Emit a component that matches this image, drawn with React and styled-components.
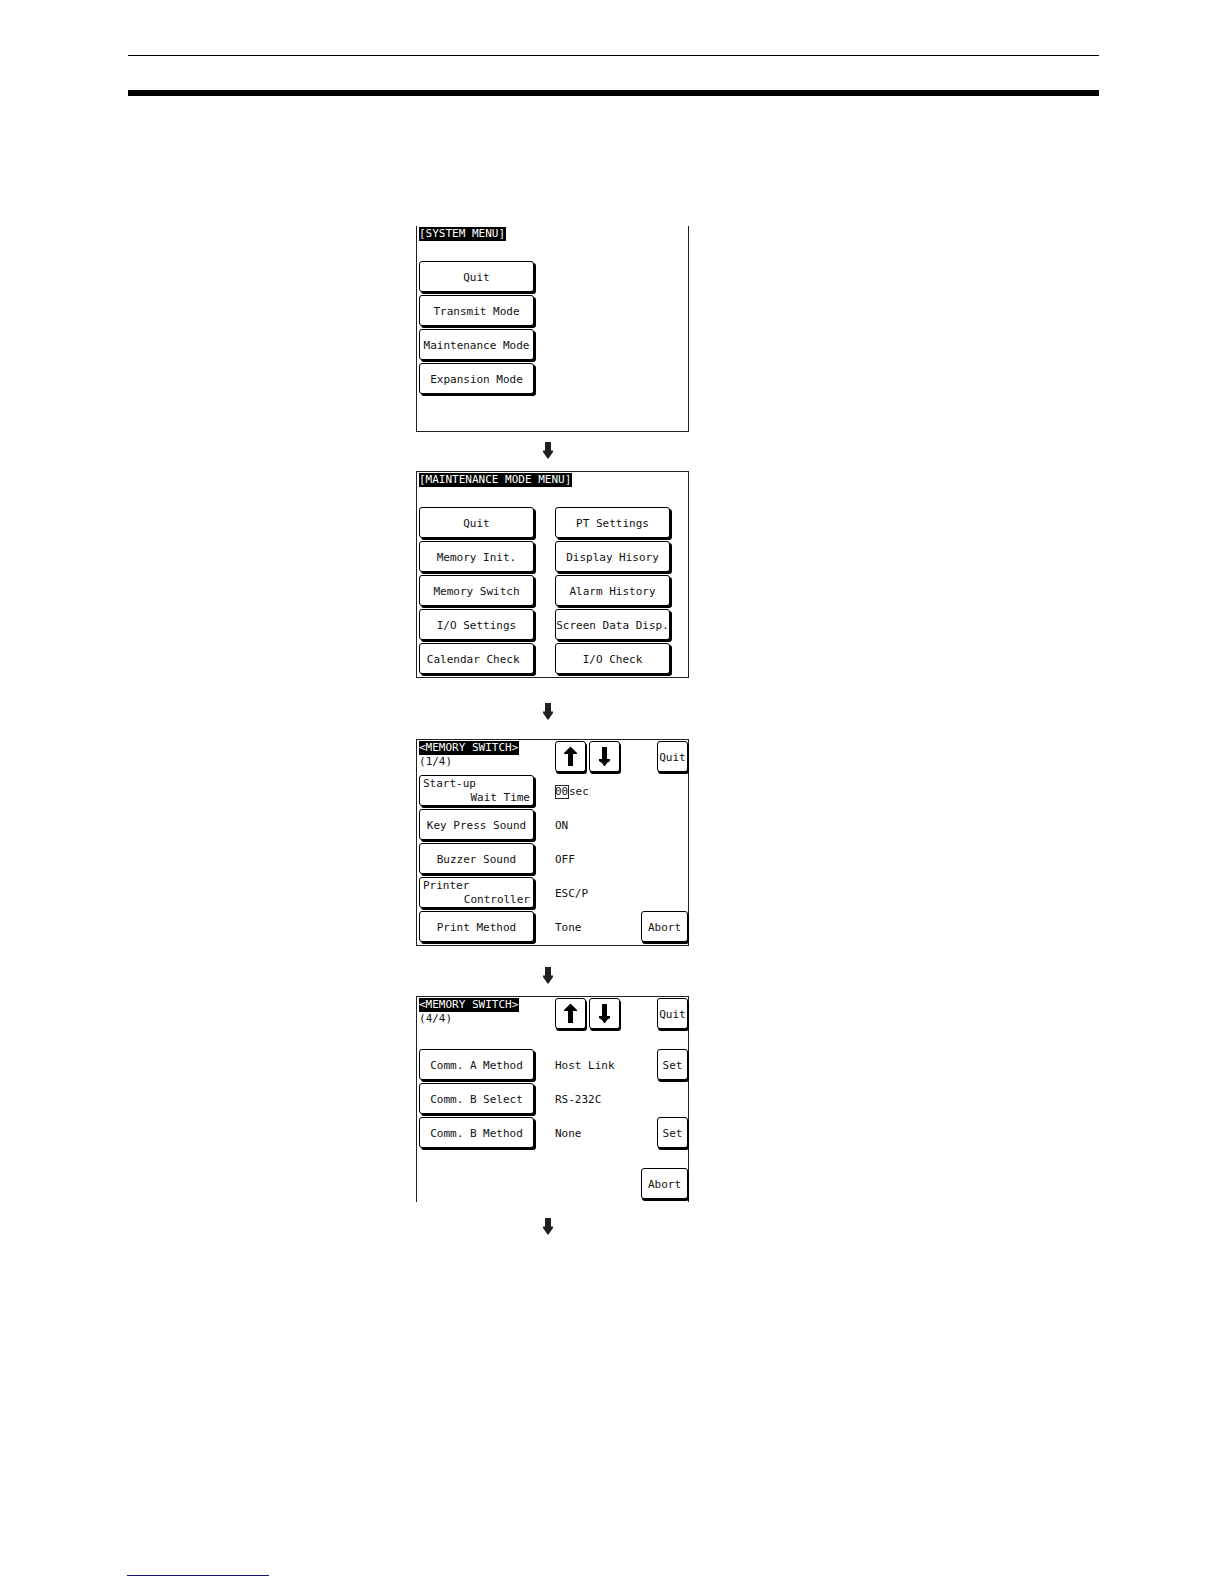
import React, { useState } from "react";
import styled, { createGlobalStyle } from "styled-components";

const GlobalStyle = createGlobalStyle`
  * {
    box-sizing: border-box;
  }
  body {
    margin: 0;
    background: #fff;
  }
`;

const Page = styled.div`
  display: flex;
  flex-direction: column;
  min-height: 100vh;
  padding: 55px 125px 8px 127px;
  color: #111;
  font-family: "DejaVu Sans Mono", "Liberation Mono", monospace;
  font-size: 11px;
  line-height: 14px;
`;

const Header = styled.header`
  height: 41px;
  margin-left: 1px;
  border-top: 1px solid #000;
  border-bottom: 6px solid #000;
`;

const Flow = styled.main`
  display: flex;
  flex-direction: column;
  align-items: flex-start;
  margin: 130px 0 40px 289px;
`;

const FootLine = styled.footer`
  width: 142px;
  margin-top: auto;
  border-top: 1px solid #14147d;
`;

const Screen = styled.section`
  display: flex;
  flex-direction: column;
  gap: ${(props) => props.$gap || 20}px;
  width: 273px;
  padding: 1px 0 ${(props) => props.$bottom || 3}px 2px;
  border: 1px solid #222;
  border-top-width: ${(props) => (props.$openTop ? 0 : 1)}px;
  border-bottom-width: ${(props) => (props.$openBottom ? 0 : 1)}px;
`;

const Title = styled.h2`
  align-self: flex-start;
  margin: 0;
  padding-right: 1px;
  background: #000;
  color: #fff;
  font-size: 11px;
  font-weight: 400;
  line-height: 14px;
  white-space: pre;
`;

const Menu = styled.nav`
  display: grid;
  grid-template-columns: 115px 115px;
  gap: 3px 21px;
`;

const Rows = styled.div`
  display: flex;
  flex-direction: column;
  gap: 3px;
`;

const Row = styled.div`
  display: grid;
  grid-template-columns: 115px 1fr auto;
  column-gap: 21px;
  align-items: center;
  min-height: 31px;
`;

const Heading = styled.div`
  display: flex;
  flex-direction: column;
  align-self: start;
`;

const Pager = styled.div`
  display: flex;
  gap: 3px;
`;

const Key = styled.button`
  display: flex;
  align-items: center;
  justify-content: center;
  height: 31px;
  padding: 3px 0 0;
  border: 1px solid #000;
  border-radius: 3px;
  background: #fff;
  box-shadow: 2px 2px 0 #000;
  color: inherit;
  font: inherit;
  white-space: pre;
`;

const TwoLineKey = styled(Key)`
  flex-direction: column;
  align-items: stretch;
  padding: 1px 3px 0;
  text-align: left;

  span + span {
    text-align: right;
  }
`;

const SmallKey = styled(Key)`
  justify-self: end;
  grid-column: 3;
  width: ${(props) => (props.$wide ? 47 : 31)}px;
  box-shadow: 1px 2px 0 #000;
`;

const PageKey = styled(SmallKey)`
  padding: 0;
`;

const Value = styled.output`
  display: flex;
  align-items: center;
  padding-top: 3px;
  white-space: pre;
`;

const Seconds = styled.input`
  width: 14px;
  height: 14px;
  padding: 0;
  border: 0;
  background: #fff;
  box-shadow: inset 0 0 0 1px #222;
  color: inherit;
  font: inherit;
`;

const Connector = styled.div`
  display: flex;
  padding: ${(props) => props.$before}px 0 ${(props) => props.$after}px 127px;

  svg {
    display: block;
  }
`;

function Next({ before, after }) {
  return (
    <Connector $before={before} $after={after}>
      <svg width="10" height="17" viewBox="0 0 10 17" aria-hidden="true">
        <path d="M2 0h6v8.500h2v1.500L5.500 16.500h-1L0 10V8.500h2z" fill="#231f20" />
      </svg>
    </Connector>
  );
}

function UpArrow() {
  return (
    <svg width="13" height="19" viewBox="0 0 13 19" aria-hidden="true">
      <path d="M6 0h1l2 2 2 2 2 2v1H9v12H4V7H0V6l2-2 2-2z" fill="#000" />
    </svg>
  );
}

function DownArrow() {
  return (
    <svg width="13" height="19" viewBox="0 0 13 19" aria-hidden="true">
      <path d="M4 0h5v12h3v2l-3 2-2 3H6l-2-3-3-2v-2h3z" fill="#000" />
    </svg>
  );
}

function SwitchHeader({ page }) {
  return (
    <Row>
      <Heading>
        <Title>{"<MEMORY SWITCH>"}</Title>
        <span>({page}/4)</span>
      </Heading>
      <Pager>
        <PageKey type="button" aria-label="Previous page"><UpArrow /></PageKey>
        <PageKey type="button" aria-label="Next page"><DownArrow /></PageKey>
      </Pager>
      <SmallKey type="button">Quit</SmallKey>
    </Row>
  );
}

// left and right column keys, row by row
const maintenanceKeys = [
  "Quit", "PT Settings",
  "Memory Init.", "Display Hisory",
  "Memory Switch", "Alarm History",
  "I/O Settings", "Screen Data Disp.",
  "Calendar Check ", "I/O Check",
];

const commRows = [
  { name: "Comm. A Method", value: "Host Link", set: true },
  { name: "Comm. B Select", value: "RS-232C", set: false },
  { name: "Comm. B Method", value: "None", set: true },
];

const SystemMenu = styled(Menu)`
  grid-template-columns: 115px;
`;

function App() {
  const [wait, setWait] = useState("00");

  return (
    <Page>
      <GlobalStyle />
      <Header />
      <Flow>
        <Screen $openTop $bottom={37}>
          <Title>[SYSTEM MENU]</Title>
          <SystemMenu>
            <Key type="button">Quit</Key>
            <Key type="button">Transmit Mode</Key>
            <Key type="button">Maintenance Mode</Key>
            <Key type="button">Expansion Mode</Key>
          </SystemMenu>
        </Screen>
        <Next before={10} after={12} />

        <Screen>
          <Title>[MAINTENANCE MODE MENU]</Title>
          <Menu>
            {maintenanceKeys.map((name, i) => (
              <Key type="button" key={i}>{name}</Key>
            ))}
          </Menu>
        </Screen>
        <Next before={25} after={19} />

        <Screen $gap={3}>
          <SwitchHeader page={1} />
          <Rows>
            <Row>
              <TwoLineKey type="button">
                <span>Start-up</span>
                <span>Wait Time</span>
              </TwoLineKey>
              <Value as="label">
                <Seconds
                  value={wait}
                  maxLength={2}
                  aria-label="Start-up wait time"
                  onChange={(e) => setWait(e.target.value)}
                />
                sec
              </Value>
            </Row>
            <Row>
              <Key type="button">Key Press Sound</Key>
              <Value>ON</Value>
            </Row>
            <Row>
              <Key type="button">Buzzer Sound</Key>
              <Value>OFF</Value>
            </Row>
            <Row>
              <TwoLineKey type="button">
                <span>Printer</span>
                <span>Controller</span>
              </TwoLineKey>
              <Value>ESC/P</Value>
            </Row>
            <Row>
              <Key type="button">Print Method</Key>
              <Value>Tone</Value>
              <SmallKey type="button" $wide>Abort</SmallKey>
            </Row>
          </Rows>
        </Screen>
        <Next before={21} after={12} />

        <Screen $openBottom>
          <SwitchHeader page={4} />
          <Rows>
            {commRows.map((row) => (
              <Row key={row.name}>
                <Key type="button">{row.name}</Key>
                <Value>{row.value}</Value>
                {row.set ? <SmallKey type="button">Set</SmallKey> : null}
              </Row>
            ))}
          </Rows>
          <Row>
            <SmallKey type="button" $wide>Abort</SmallKey>
          </Row>
        </Screen>
        <Next before={16} after={0} />
      </Flow>
      <FootLine />
    </Page>
  );
}

export default App;
